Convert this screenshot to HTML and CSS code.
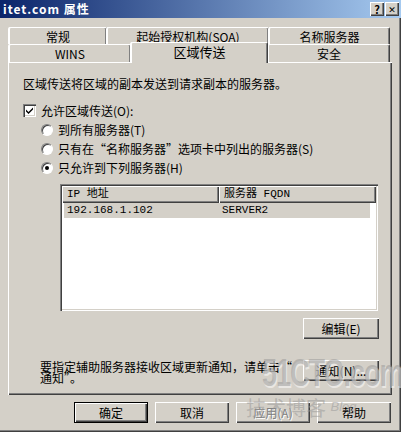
FILE: index.html
```html
<!DOCTYPE html>
<html lang="zh-CN">
<head>
  <meta charset="UTF-8">
  <title>itet.com 属性</title>
  <link rel="stylesheet" href="styles.css">
</head>
<body>
  <div class="window">
    <div class="titlebar">
      <span class="title">itet.com 属性</span>
      <div class="title-buttons">
        <span class="tbtn">?</span>
        <span class="tbtn close">&#x2715;</span>
      </div>
    </div>

    <div class="tabs">
      <div class="tab-row">
        <div class="tab w98">常规</div>
        <div class="tab w162">起始授权机构(SOA)</div>
        <div class="tab w121">名称服务器</div>
      </div>
      <div class="tab-row">
        <div class="tab w122">WINS</div>
        <div class="tab w137 active">区域传送</div>
        <div class="tab w122">安全</div>
      </div>
    </div>

    <div class="panel">
      <p class="desc">区域传送将区域的副本发送到请求副本的服务器。</p>

      <div class="check-row">
        <span class="checkbox">
          <svg width="9" height="9" viewBox="0 0 9 9"><path d="M1 3.5 L3.5 6 L8 1.5 L8 3.5 L3.5 8 L1 5.5 Z" fill="#000"/></svg>
        </span>
        <span>允许区域传送(O):</span>
      </div>

      <div class="radios">
        <div class="radio-row"><span class="radio"></span><span>到所有服务器(T)</span></div>
        <div class="radio-row"><span class="radio"></span><span>只有在“名称服务器”选项卡中列出的服务器(S)</span></div>
        <div class="radio-row"><span class="radio on"></span><span>只允许到下列服务器(H)</span></div>
      </div>

      <div class="listbox">
        <div class="list-head">
          <div class="col col-ip">IP 地址</div>
          <div class="col col-name">服务器 FQDN</div>
        </div>
        <div class="list-item">
          <span class="cell-ip">192.168.1.102</span>
          <span class="cell-name">SERVER2</span>
        </div>
      </div>

      <div class="edit-row">
        <button class="btn">编辑(E)</button>
      </div>

      <div class="notify-row">
        <p class="notify-text">要指定辅助服务器接收区域更新通知，请单击“<br>通知”。</p>
        <button class="btn">通知(N)...</button>
      </div>
    </div>

    <div class="actions">
      <button class="btn default">确定</button>
      <button class="btn">取消</button>
      <button class="btn disabled">应用(A)</button>
      <button class="btn">帮助</button>
    </div>

    <div class="watermark">
      <div class="wm-big">51CTO.com</div>
      <div class="wm-small">技术博客 <span class="wm-blog">Blog</span></div>
    </div>
  </div>
</body>
</html>
```

FILE: styles.css
```css
body {
  margin: 0;
  padding: 0;
  background: #d4d0c8;
  font-family: "Noto Sans CJK SC", "DejaVu Sans", sans-serif;
  font-size: 12px;
  color: #000;
}
.window {
  position: relative;
  width: 401px;
  height: 432px;
  background: #d4d0c8;
  box-shadow: inset -1px -1px #404040, inset -2px -2px #808080;
}
.titlebar {
  height: 18px;
  display: flex;
  align-items: center;
  justify-content: space-between;
  padding: 0 2px 0 3px;
  background: linear-gradient(to right, #0a246a, #a6caf0);
}
.title {
  color: #fff;
  font-weight: bold;
  font-size: 12px;
  line-height: 18px;
  letter-spacing: 1px;
}
.title-buttons {
  display: flex;
  gap: 1px;
}
.tbtn {
  width: 14px;
  height: 14px;
  display: flex;
  align-items: center;
  justify-content: center;
  background: #d4d0c8;
  font-size: 11px;
  font-weight: bold;
  line-height: 1;
  box-shadow: inset 1px 1px #fff, inset -1px -1px #404040, inset -2px -2px #808080;
}
.tbtn.close {
  font-size: 9px;
}
.tabs {
  margin-top: 9px;
  padding-left: 9px;
  position: relative;
  z-index: 1;
}
.tab-row {
  display: flex;
  height: 17px;
}
.tab-row + .tab-row {
  height: 18px;
}
.tab {
  height: 100%;
  box-sizing: border-box;
  text-align: center;
  line-height: 17px;
  border-top: 1px solid #fff;
  border-left: 1px solid #fff;
  border-radius: 2px 2px 0 0;
  box-shadow: inset -1px 0 #808080, -1px 0 0 #fff;
  border-right: 1px solid #404040;
  background: #d4d0c8;
}
.active {
  height: 21px;
  margin-top: -2px;
  line-height: 18px;
  font-size: 13px;
  z-index: 2;
}
.w98 { width: 98px; }
.w162 { width: 162px; }
.w121 { width: 121px; }
.w122 { width: 122px; }
.w137 { width: 137px; }
.panel {
  margin-left: 8px;
  width: 384px;
  height: 333px;
  box-sizing: border-box;
  padding: 15px 0 0 15px;
  box-shadow: inset 1px 1px #fff, inset -1px -1px #404040, inset -2px -2px #808080;
}
.desc {
  margin: 0;
  line-height: 14px;
}
.check-row {
  margin-top: 13px;
  display: flex;
  align-items: center;
  gap: 5px;
  height: 13px;
}
.checkbox {
  width: 13px;
  height: 13px;
  box-sizing: border-box;
  background: #fff;
  box-shadow: inset 1px 1px #808080, inset 2px 2px #404040, inset -1px -1px #fff, inset -2px -2px #d4d0c8;
  display: flex;
  align-items: center;
  justify-content: center;
}
.radios {
  margin-left: 18px;
  margin-top: 6px;
  display: flex;
  flex-direction: column;
  gap: 6px;
}
.radio-row {
  display: flex;
  align-items: center;
  gap: 5px;
  height: 13px;
}
.radio {
  width: 12px;
  height: 12px;
  border-radius: 50%;
  background: #fff;
  box-sizing: border-box;
  border: 1px solid;
  border-color: #808080 #fff #fff #808080;
  box-shadow: inset 1px 1px #404040;
  position: relative;
}
.radio.on::after {
  content: "";
  position: absolute;
  left: 3px;
  top: 3px;
  width: 4px;
  height: 4px;
  border-radius: 50%;
  background: #000;
}
.listbox {
  margin-top: 10px;
  margin-left: 37px;
  width: 318px;
  height: 127px;
  box-sizing: border-box;
  background: #fff;
  padding: 2px;
  box-shadow: inset 1px 1px #808080, inset 2px 2px #404040, inset -1px -1px #fff, inset -2px -2px #d4d0c8;
}
.list-head {
  display: flex;
  height: 17px;
}
.col {
  box-sizing: border-box;
  height: 17px;
  line-height: 16px;
  padding-left: 5px;
  background: #d4d0c8;
  box-shadow: inset 1px 1px #fff, inset -1px -1px #404040, inset -2px -2px #808080;
  font-family: "Liberation Mono", "Noto Sans CJK SC", monospace;
  font-size: 11px;
}
.col-ip { width: 157px; }
.col-name { flex: 1; }
.list-item {
  display: flex;
  height: 15px;
  margin-left: 2px;
  margin-right: 6px;
  line-height: 15px;
  background: #d4d0c8;
  font-family: "Liberation Mono", monospace;
  font-size: 11px;
}
.cell-ip {
  width: 155px;
  padding-left: 3px;
}
.edit-row {
  display: flex;
  justify-content: flex-end;
  padding-right: 13px;
  margin-top: 7px;
}
.btn {
  width: 76px;
  height: 21px;
  padding: 0;
  border: none;
  background: #d4d0c8;
  font-family: "Noto Sans CJK SC", "DejaVu Sans", sans-serif;
  font-size: 12px;
  color: #000;
  white-space: nowrap;
  box-shadow: inset 1px 1px #fff, inset -1px -1px #404040, inset -2px -2px #808080;
}
.notify-row {
  display: flex;
  justify-content: space-between;
  align-items: flex-start;
  padding-right: 13px;
  margin-top: 21px;
}
.notify-text {
  margin: 1px 0 0 17px;
  line-height: 11px;
}
.actions {
  display: flex;
  justify-content: flex-end;
  gap: 7px;
  padding-right: 10px;
  margin-top: 7px;
}
.actions .btn {
  width: 74px;
  height: 21px;
}
.btn.default {
  box-shadow: inset 0 0 0 1px #000, inset 2px 2px #fff, inset -2px -2px #404040, inset -3px -3px #808080;
}
.btn.disabled {
  color: #808080;
  text-shadow: 1px 1px #fff;
}
.watermark {
  position: absolute;
  left: 262px;
  top: 352px;
  width: 130px;
  color: rgba(150, 150, 150, 0.5);
  pointer-events: none;
}
.wm-big {
  width: 128px;
  font-family: "Liberation Sans", sans-serif;
  font-size: 27px;
  font-weight: bold;
  line-height: 42px;
  white-space: nowrap;
  letter-spacing: -1px;
  transform: scaleY(1.45);
  text-shadow: 1px 1px rgba(255, 255, 255, 0.5);
}
.wm-small {
  margin-left: -16px;
  font-size: 20px;
  line-height: 26px;
  white-space: nowrap;
}
.wm-blog {
  font-family: "Liberation Sans", sans-serif;
  font-size: 13px;
  font-style: italic;
  vertical-align: 5px;
}
```
